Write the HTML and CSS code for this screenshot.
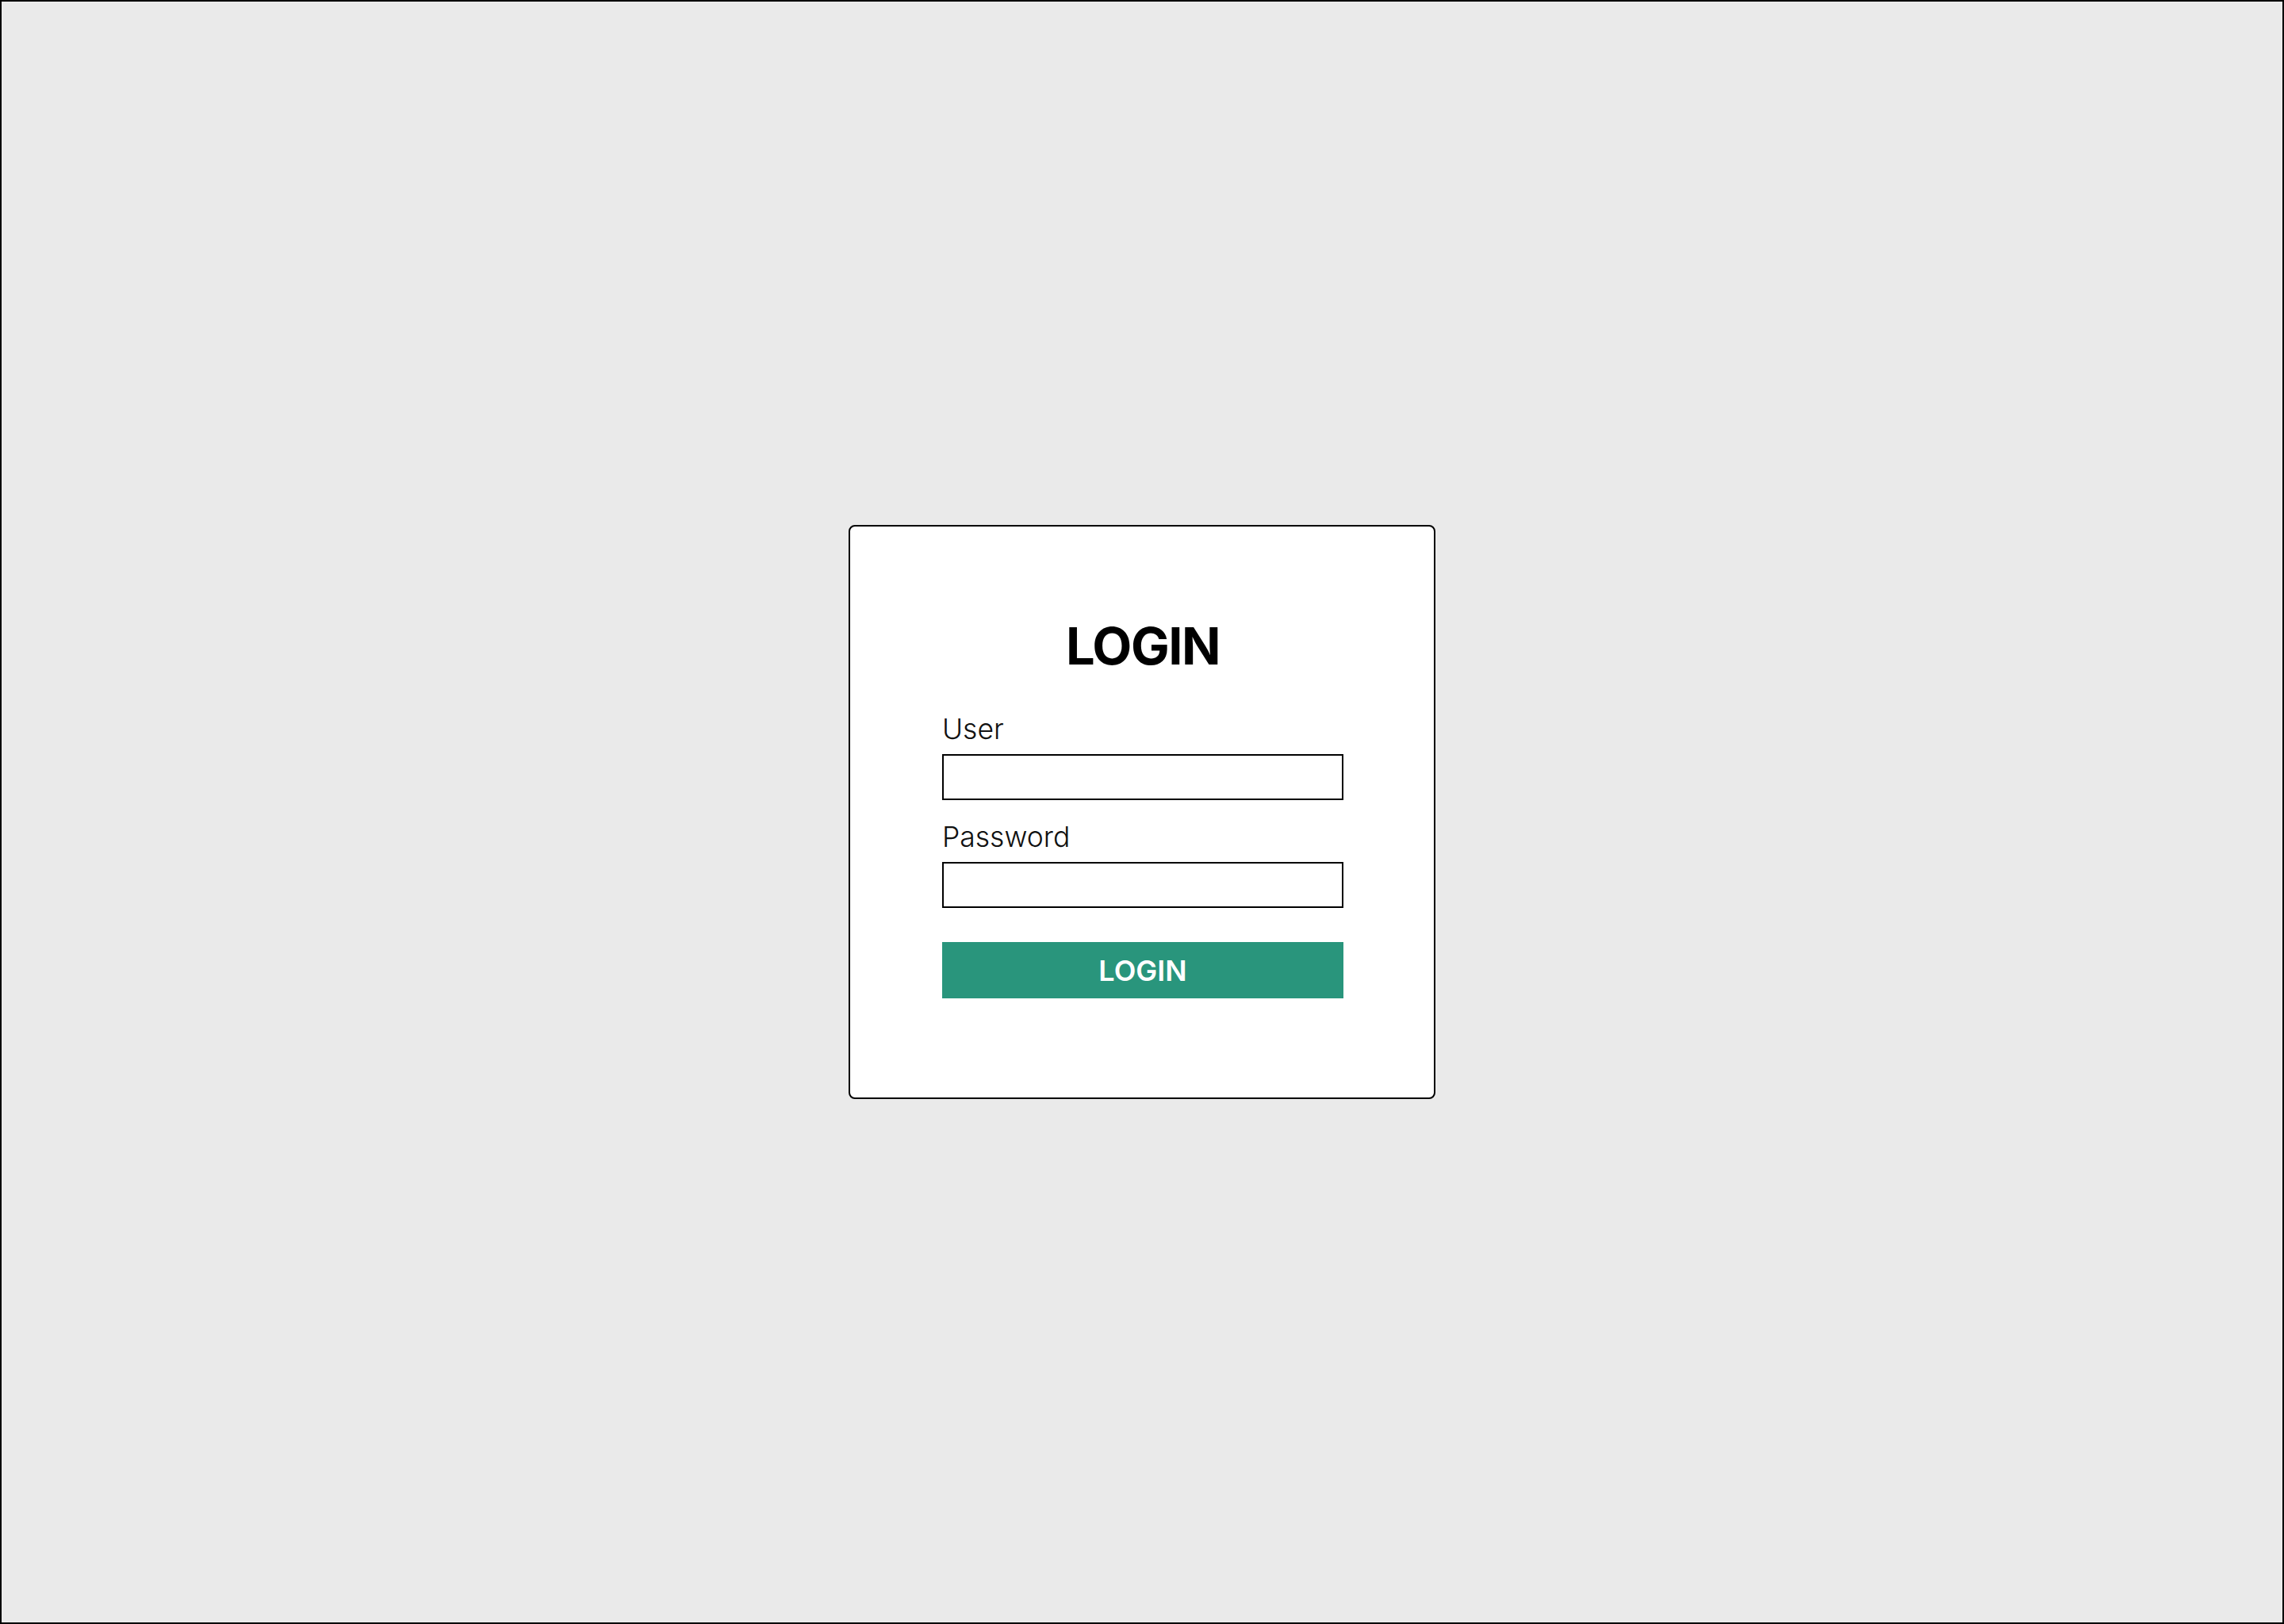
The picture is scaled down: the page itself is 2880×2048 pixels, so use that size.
FILE: index.html
```html
<!DOCTYPE html>
<html lang="en">
<head>
<meta charset="utf-8">
<title>Login</title>
<link rel="stylesheet" href="styles.css">
</head>
<body>
<div class="page">
  <form class="card">
    <h1 class="title">LOGIN</h1>
    <label class="label" for="user">User</label>
    <input class="field" id="user" type="text">
    <label class="label label-gap" for="pass">Password</label>
    <input class="field" id="pass" type="password">
    <button class="btn" type="button">LOGIN</button>
  </form>
</div>
</body>
</html>
```
FILE: styles.css
```css
* { box-sizing: border-box; }
html, body { margin: 0; padding: 0; }
body { font-family: Inter, "Noto Sans", sans-serif; }
.page {
  width: 2880px;
  height: 2048px;
  border: 2px solid #000;
  background: #eaeaea;
  display: flex;
  align-items: center;
  justify-content: center;
}
.card {
  width: 740px;
  background: #fff;
  border: 2px solid #000;
  border-radius: 8px;
  padding: 117px 114px 125px 116px;
  display: flex;
  flex-direction: column;
}
.title {
  margin: 0 0 55px 0;
  font-size: 65px;
  line-height: 67px;
  letter-spacing: -1.5px;
  font-weight: 700;
  text-align: center;
  color: #000;
}
.label {
  font-size: 35.5px;
  line-height: 34px;
  font-weight: 300;
  color: #111;
  margin-bottom: 14px;
}
.label-gap { margin-top: 30px; }
.field {
  width: 506px;
  height: 58px;
  border: 2px solid #000;
  border-radius: 0;
  background: #fff;
  margin: 0;
  padding: 0 12px;
  font: inherit;
  font-size: 30px;
}
.btn {
  width: 506px;
  height: 71px;
  margin-top: 43px;
  border: 0;
  background: #29957c;
  color: #fff;
  font-family: inherit;
  font-size: 36px;
  font-weight: 600;
  padding: 0;
}
```
